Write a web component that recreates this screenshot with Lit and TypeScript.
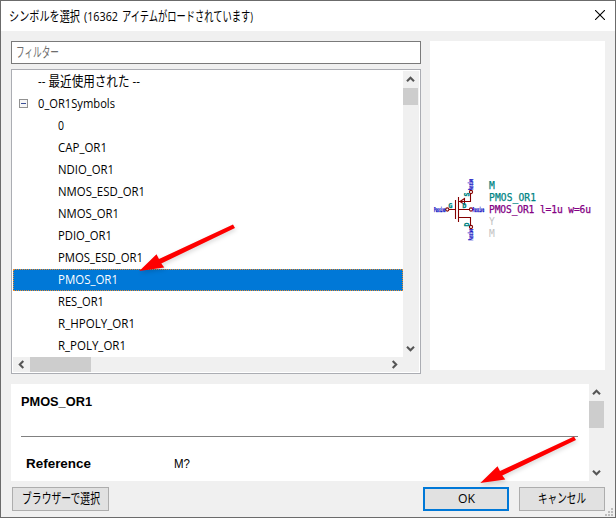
import { LitElement, html, svg, css } from "lit";
import { customElement, property } from "lit/decorators.js";

/** A single line of text condensed or stretched to a fixed advance width. */
@customElement("fit-text")
class FitText extends LitElement {
  @property() text = "";
  @property({ type: Number }) width = 10;
  static styles = css`
    :host { display: block; flex: none; height: 18px; }
    svg { display: block; overflow: visible; }
    text { fill: currentColor; white-space: pre; }
    .kana { font-size: 13.2px; }
  `;
  render() {
    const kana = /[\u3040-\u9fff]/.test(this.text);
    return html`<svg width=${this.width} height="18">
      <text class=${kana ? "kana" : ""} x="0" y="14" textLength=${this.width} lengthAdjust="spacingAndGlyphs">${this.text}</text>
    </svg>`;
  }
}

@customElement("chevron-icon")
class ChevronIcon extends LitElement {
  @property() dir = "up";
  static styles = css`
    :host { display: block; width: 9px; height: 9px; }
    svg { display: block; fill: none; stroke: #555; stroke-width: 2.1; }
  `;
  render() {
    const paths: Record<string, string> = {
      up: "M1 6.3 4.5 2.8 8 6.3",
      down: "M1 2.7 4.5 6.2 8 2.7",
      left: "M6.3 1 2.8 4.5 6.3 8",
      right: "M2.7 1 6.2 4.5 2.7 8",
    };
    return html`<svg width="9" height="9"><path d=${paths[this.dir]} /></svg>`;
  }
}

@customElement("pointer-arrow")
class PointerArrow extends LitElement {
  static styles = css`
    :host { display: block; pointer-events: none; }
    svg { display: block; overflow: visible; filter: drop-shadow(1px 2px 2px rgba(0, 0, 0, 0.15)); }
  `;
  render() {
    return html`<svg width="96" height="48">
      <path fill="#fe0000" d="M0.3 46 17.5 29.3 20 34 94 -0.6 96 3 22.3 38.5 25.3 42.6Z" />
    </svg>`;
  }
}

@customElement("symbol-preview")
class SymbolPreview extends LitElement {
  static styles = css`
    :host { display: block; width: 175px; height: 329px; background: #fff; }
    svg { display: block; }
    .body { fill: none; stroke: #840000; stroke-width: 1.1; }
    .pin { font: bold 6.5px "DejaVu Sans Mono", monospace; fill: #0000c0; stroke: #0000c0; stroke-width: 0.3; }
    .name { font: 6.4px "DejaVu Sans Mono", monospace; fill: #008484; stroke: #008484; stroke-width: 0.5; }
    .field { font: 9.6px "DejaVu Sans Mono", monospace; stroke-width: 0.25; }
    .teal { fill: #008484; stroke: #008484; }
    .purple { fill: #840084; stroke: #840084; }
    .gray { fill: #c2c2c2; }
  `;
  render() {
    const pin = (x: number, y: number, turn: number) => svg`
      <text class="pin" textLength="11.5" lengthAdjust="spacingAndGlyphs"
        transform="translate(${x} ${y}) rotate(${turn})">Passive</text>`;
    return html`<svg width="175" height="329" viewBox="430 41 175 329">
      <g class="body">
        <path d="M455.5 200v19M458.5 197v25M449 209.5h6.5M459 201.5h11.5v-8M459 209.5h10.5M459 217.5h11.5v8" />
        <path d="M464.5 198.5v6L460 201.5z" />
        <circle cx="447.3" cy="209.5" r="1.6" /><circle cx="471" cy="209.5" r="1.6" />
        <circle cx="471" cy="192" r="1.6" /><circle cx="471" cy="227" r="1.6" />
      </g>
      ${pin(434, 211.8, 0)}${pin(472.6, 211.8, 0)}${pin(472.9, 190.3, -90)}${pin(472.9, 240.4, -90)}
      <text class="name" x="448.4" y="208">G</text>
      <text class="name" x="462.6" y="208.3">D</text>
      <text class="name" transform="translate(469.3 196.5) rotate(-90)">S</text>
      <text class="name" transform="translate(469.3 226.5) rotate(-90)">D</text>
      <text class="field teal" x="489" y="189">M</text>
      <text class="field teal" x="489" y="201.3" textLength="47">PMOS_OR1</text>
      <text class="field purple" x="489" y="213.3" textLength="102">PMOS_OR1 l=1u w=6u</text>
      <text class="field gray" x="489" y="225">Y</text>
      <text class="field gray" x="489" y="236.8">M</text>
    </svg>`;
  }
}

const symbols: [string, number][] = [
  ["0", 6], ["CAP_OR1", 49], ["NDIO_OR1", 56], ["NMOS_ESD_OR1", 87], ["NMOS_OR1", 61],
  ["PDIO_OR1", 54], ["PMOS_ESD_OR1", 85], ["PMOS_OR1", 60], ["RES_OR1", 46],
  ["R_HPOLY_OR1", 77], ["R_POLY_OR1", 68],
];

@customElement("app-root")
class AppRoot extends LitElement {
  static styles = css`
    :host {
      display: flex; flex-direction: column; position: relative; box-sizing: border-box;
      width: 616px; height: 518px; border: 1px solid #6b6b6b; background: #f0f0f0; overflow: hidden;
      color: #000; font: 12.3px "Open Sans", "Noto Sans CJK JP", sans-serif;
    }
    * { box-sizing: border-box; }
    .title { display: flex; justify-content: space-between; height: 30px; flex: none; background: #fff; padding: 6px 10px 0 8px; }
    .title svg { margin-top: 3px; }
    .words { display: flex; gap: 4px; }
    .main { display: flex; justify-content: space-between; padding: 10px 10px 0; height: 343px; flex: none; }
    .left { display: flex; flex-direction: column; width: 410px; gap: 5px; }
    .filter { height: 23px; border: 1px solid #7a7a7a; background: #fff; padding: 1px 4px; color: #6d6d6d; }
    .tree { height: 306px; border: 1px solid #abadb3; background: #fff; padding: 1px; }
    .top { display: flex; height: 286px; }
    .rows { flex: 1; }
    .row { display: flex; gap: 4px; height: 22px; padding: 1px 0 0 45px; }
    .heading { padding-left: 25px; }
    .group { padding-left: 6px; gap: 10px; }
    .group svg { margin-top: 5px; }
    .selected { background: #0078d7; color: #fff; outline: 1px dotted #e98b2f; outline-offset: -1px; }
    .vbar { width: 15px; margin-right: 1px; box-shadow: 1px 0 #f0f0f0; background: #f0f0f0; display: flex; flex-direction: column; align-items: center; justify-content: space-between; }
    .vbar .head { height: 34px; width: 15px; display: flex; flex-direction: column; align-items: center; justify-content: space-between; padding-top: 4px; }
    .vbar .thumb { width: 15px; height: 17px; background: #cdcdcd; }
    .vbar .end { height: 13px; }
    .hbar { display: flex; align-items: center; height: 15px; background: #f0f0f0; padding: 0 20px 0 4px; }
    .hbar .thumb { width: 61px; height: 15px; background: #cdcdcd; margin-left: 4px; }
    .hbar .right { margin-left: auto; }
    .details { display: flex; height: 97px; flex: none; margin: 10px 10px 0; }
    .sheet { width: 578px; background: #fff; padding: 8px 11px 0 10px; font-family: "Liberation Sans", sans-serif; font-size: 13.3px; }
    .sheet b { display: block; }
    .line { height: 1px; background: #808080; margin: 26px 0 17px; }
    .fields { display: flex; padding-left: 5px; gap: 83px; }
    .dbar { height: 97px; }
    .dbar .head { height: 44px; }
    .dbar .thumb { height: 27px; }
    .buttons { display: flex; margin: 6px 10px 0 11px; gap: 10px; }
    .button { height: 24px; width: 86px; border: 1px solid #adadad; background: #e1e1e1; display: flex; justify-content: center; padding-top: 1px; }
    .browse { width: 97px; margin-right: auto; }
    .default { border: 2px solid #0078d7; padding-top: 0; }
    .arrow { position: absolute; }
    .a1 { left: 138px; top: 224px; }
    .a2 { left: 479px; top: 435.5px; }
    .grip { position: absolute; right: 2px; bottom: 1px; fill: #bdbdbd; }
  `;
  render() {
    return html`
      <div class="title">
        <div class="words">
          <fit-text text="シンボルを選択" width="71"></fit-text>
          <fit-text text="(16362" width="34"></fit-text>
          <fit-text text="アイテムがロードされています)" width="131"></fit-text>
        </div>
        <svg width="10" height="10" stroke="#000" stroke-width="1.1"><path d="M0 0 10 10M10 0 0 10" /></svg>
      </div>
      <div class="main">
        <div class="left">
          <div class="filter"><fit-text text="フィルター" width="43"></fit-text></div>
          <div class="tree">
            <div class="top">
              <div class="rows">
                <div class="row heading">
                  <fit-text text="-- 最近使用された --" width="102"></fit-text>
                </div>
                <div class="row group">
                  <svg width="9" height="9"><rect x=".5" y=".5" width="8" height="8" fill="#f6f6f6" stroke="#919191" /><path d="M2 4.5h5" stroke="#3b4f96" /></svg>
                  <fit-text text="0_OR1Symbols" width="77"></fit-text>
                </div>
                ${symbols.map(([name, width]) => html`
                  <div class="row ${name === "PMOS_OR1" ? "selected" : ""}">
                    <fit-text .text=${name} .width=${width}></fit-text>
                  </div>`)}
              </div>
              <div class="vbar">
                <div class="head"><chevron-icon dir="up"></chevron-icon><div class="thumb"></div></div>
                <div class="end"><chevron-icon dir="down"></chevron-icon></div>
              </div>
            </div>
            <div class="hbar">
              <chevron-icon dir="left"></chevron-icon>
              <div class="thumb"></div>
              <chevron-icon class="right" dir="right"></chevron-icon>
            </div>
          </div>
        </div>
        <symbol-preview></symbol-preview>
      </div>
      <div class="details">
        <div class="sheet">
          <b><fit-text text="PMOS_OR1" width="71"></fit-text></b>
          <div class="line"></div>
          <div class="fields">
            <b><fit-text text="Reference" width="65"></fit-text></b>
            <fit-text text="M?" width="16"></fit-text>
          </div>
        </div>
        <div class="vbar dbar">
          <div class="head"><chevron-icon dir="up"></chevron-icon><div class="thumb"></div></div>
          <div class="end"><chevron-icon dir="down"></chevron-icon></div>
        </div>
      </div>
      <div class="buttons">
        <div class="button browse"><fit-text text="ブラウザーで選択" width="78"></fit-text></div>
        <div class="button default"><fit-text text="OK" width="17"></fit-text></div>
        <div class="button"><fit-text text="キャンセル" width="48"></fit-text></div>
      </div>
      <pointer-arrow class="arrow a1"></pointer-arrow>
      <pointer-arrow class="arrow a2"></pointer-arrow>
      <svg class="grip" width="8" height="8">
        <path d="M6 0h2v2h-2zM3 3h2v2h-2zM6 3h2v2h-2zM0 6h2v2h-2zM3 6h2v2h-2zM6 6h2v2h-2z" />
      </svg>`;
  }
}
